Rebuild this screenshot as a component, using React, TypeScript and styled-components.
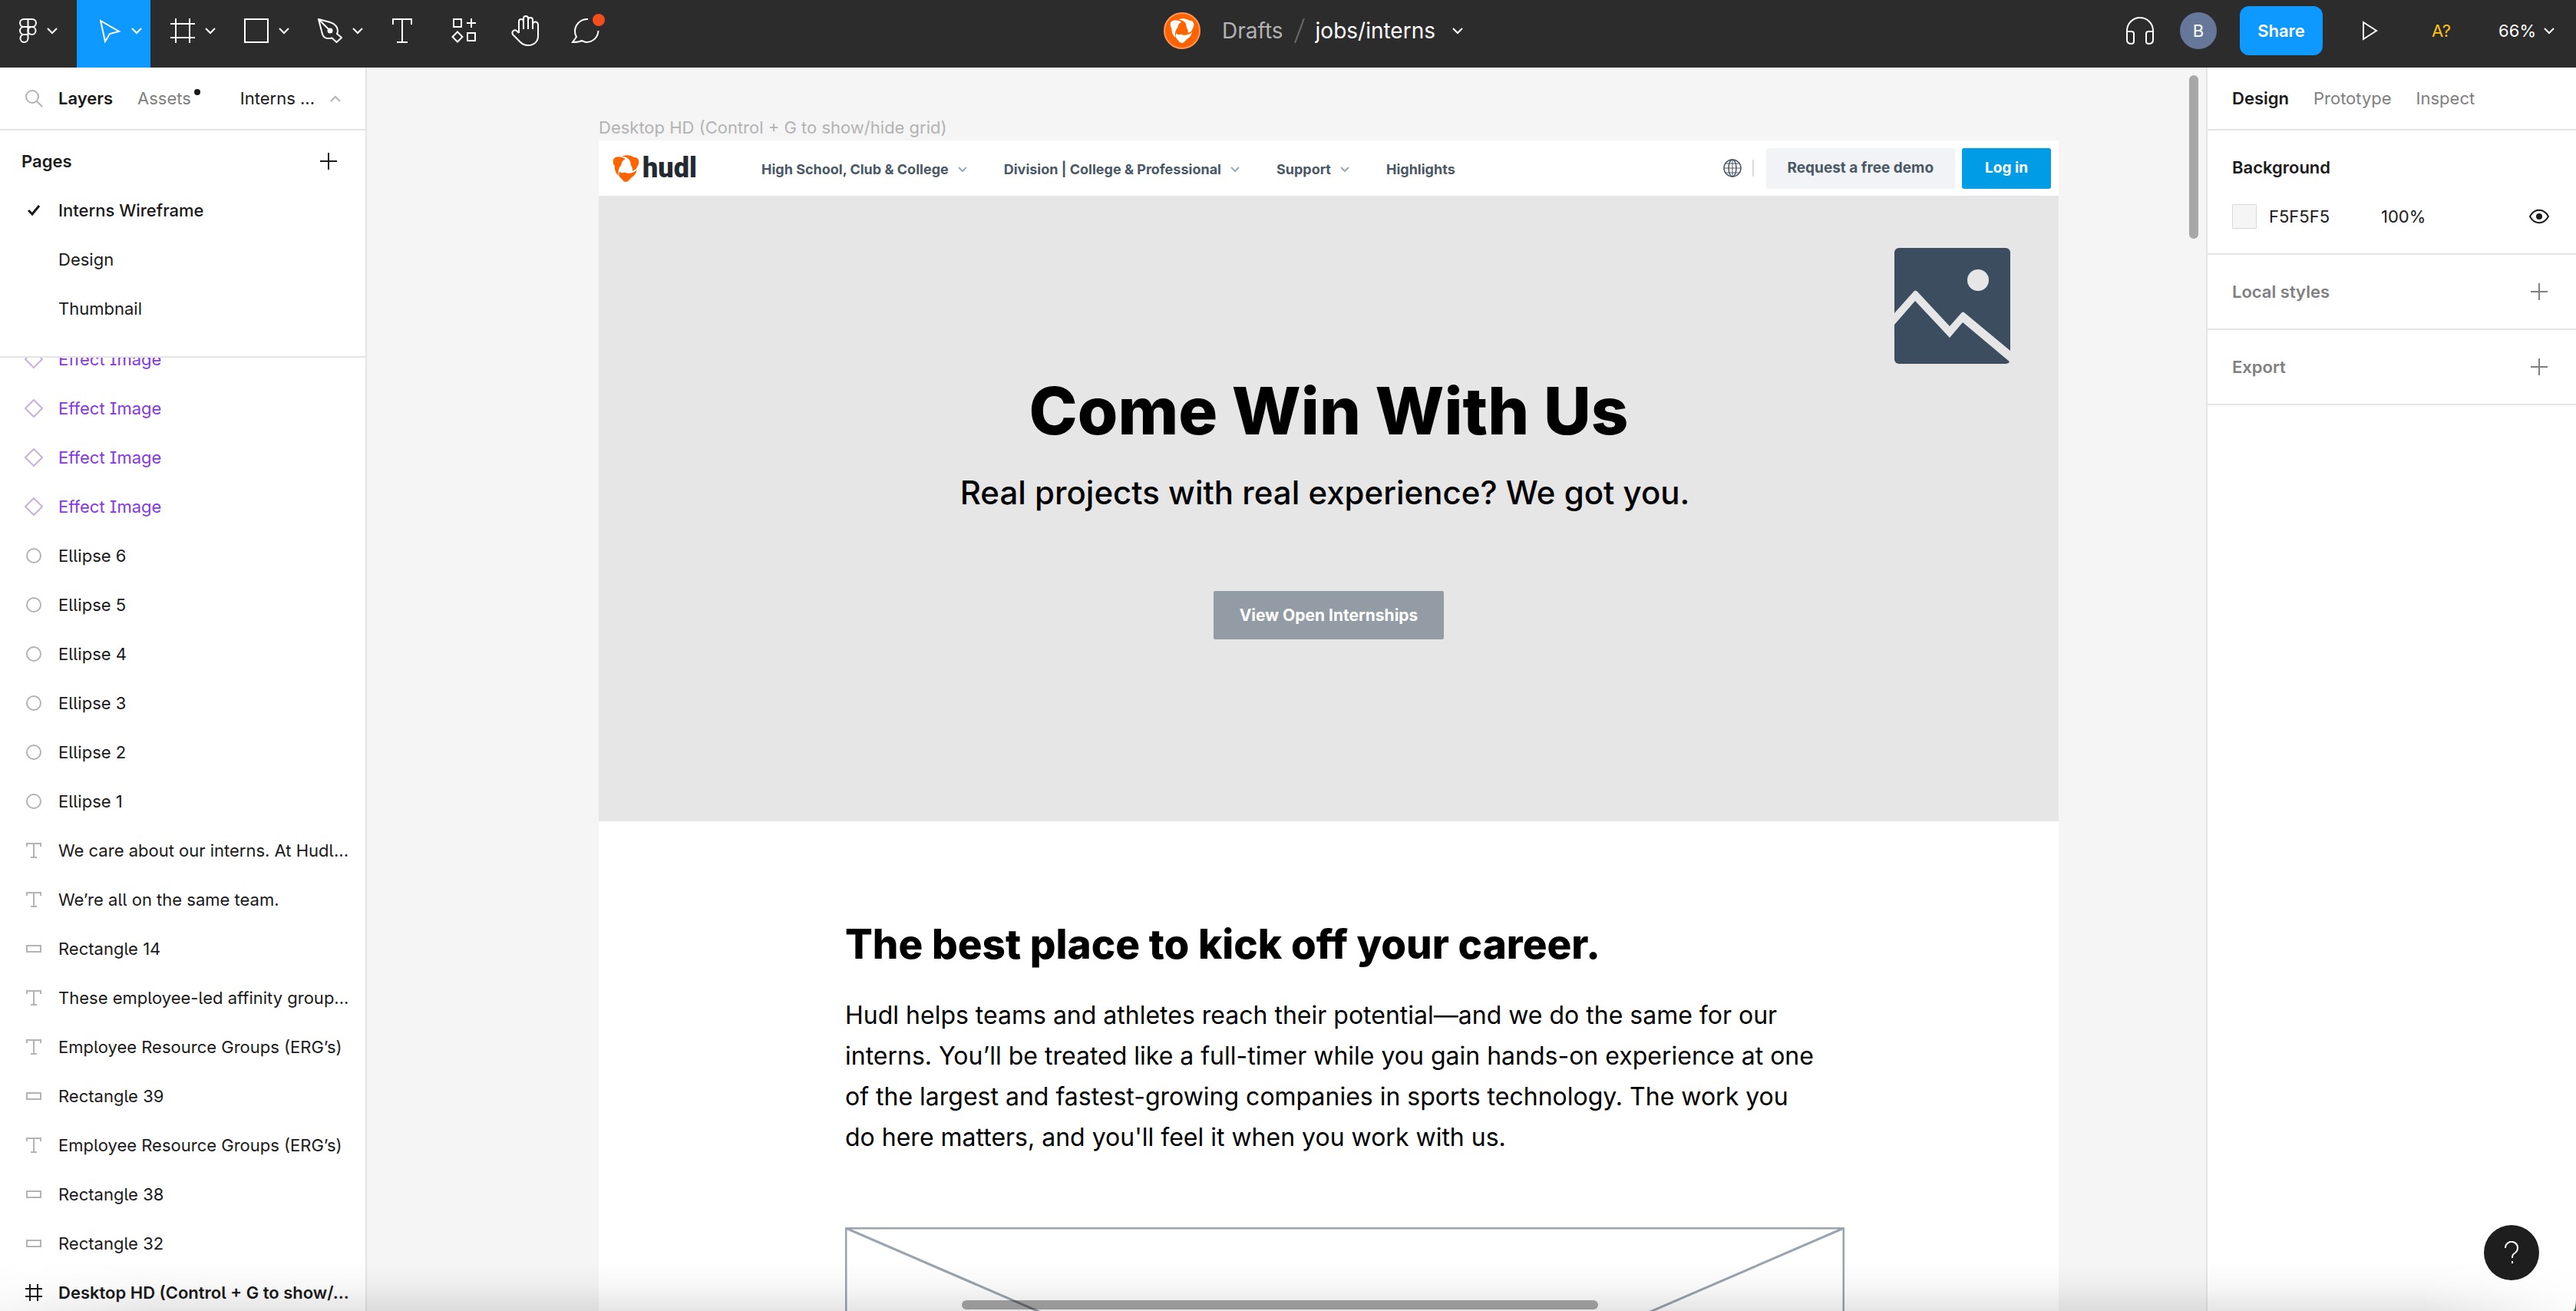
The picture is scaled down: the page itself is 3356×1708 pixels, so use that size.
import React from "react";
import styled, { createGlobalStyle } from "styled-components";

const GlobalStyle = createGlobalStyle`
  *, *::before, *::after { box-sizing: border-box; }
  body {
    margin: 0;
    background: #3f6b4d;
    font-family: Inter, "Noto Sans", sans-serif;
    font-size: 22px;
    line-height: 32px;
    color: #1a1a1a;
  }
  button, input {
    font: inherit;
    letter-spacing: inherit;
    color: inherit;
    background: none;
    border: 0;
    padding: 0;
    margin: 0;
  }
  button { cursor: pointer; }
  a { color: inherit; text-decoration: none; }
  h1, h2, h3, p, ul { margin: 0; padding: 0; }
  ul { list-style: none; }
  svg { display: block; flex: none; }
`;

/* ---------- shell ---------- */

const Shell = styled.div`
  position: relative;
  display: grid;
  grid-template-rows: 88px minmax(0, 1fr);
  height: 100vh;
  overflow: hidden;
  background: #fff;
  border-bottom-right-radius: 4px 16px;
`;

const Workspace = styled.div`
  display: grid;
  grid-template-columns: 478px minmax(0, 1fr) 482px;
  min-height: 0;
`;

const BottomShade = styled.div`
  position: absolute;
  inset: auto 0 0 0;
  height: 64px;
  pointer-events: none;
  background: linear-gradient(to bottom, rgba(0, 0, 0, 0), rgba(0, 0, 0, 0.03) 50%, rgba(0, 0, 0, 0.1));
  mask-image: linear-gradient(to right, rgba(0, 0, 0, 0.3), #000 6%, #000 94%, rgba(0, 0, 0, 0.1));
`;

const HelpButton = styled.button`
  position: absolute;
  right: 48px;
  bottom: 40px;
  width: 72px;
  height: 72px;
  border-radius: 50%;
  background: #1e1e1e;
  color: #fff;
  display: grid;
  place-items: center;
`;

/* ---------- top bar ---------- */

const TopBar = styled.header`
  display: grid;
  grid-template-columns: auto 1fr 738px;
  background: #2c2c2c;
  color: #fff;
`;

const ToolGroup = styled.div`
  display: flex;
  align-items: stretch;
`;

const Tool = styled.button<{ $active?: boolean }>`
  width: 80px;
  display: flex;
  align-items: center;
  justify-content: center;
  padding-bottom: 8px;
`;

const MenuTool = styled(Tool)<{ $end?: number }>`
  width: ${(p) => (p.$end ? 100 : 96)}px;
  justify-content: flex-end;
  gap: 13px;
  padding-right: ${(p) => p.$end ?? 11}px;
  background: ${(p) => (p.$active ? "#0d99ff" : "transparent")};
`;

const FileTitle = styled.div`
  display: flex;
  align-items: center;
  justify-content: center;
  padding-bottom: 8px;
  font-size: 28px;
`;

const TeamAvatar = styled.span`
  width: 48px;
  height: 48px;
  margin-right: 28px;
  border-radius: 50%;
  border: 2px solid #ff9759;
  background: #ff6300;
  display: grid;
  place-items: center;
`;

const FolderLink = styled.a`
  color: #b3b3b3;
`;

const Slash = styled.svg`
  margin: 0 14px;
`;

const FileButton = styled.button`
  display: flex;
  align-items: center;
  gap: 22px;
`;

const RightGroup = styled.div`
  display: flex;
  align-items: center;
  justify-content: flex-end;
  padding: 0 28px 8px 0;
`;

const UserAvatar = styled.span`
  width: 48px;
  height: 48px;
  margin: 0 30px 0 34px;
  border-radius: 50%;
  background: #667799;
  display: grid;
  place-items: center;
`;

const ShareButton = styled.button`
  width: 108px;
  height: 64px;
  border-radius: 12px;
  background: #0d99ff;
  font-weight: 600;
`;

const PlayButton = styled.button`
  margin: 0 70px 0 52px;
`;

const MissingFont = styled.button`
  margin-right: 62px;
  color: #ffc21a;
`;

const ZoomButton = styled.button`
  display: flex;
  align-items: center;
  gap: 10px;
`;

/* ---------- left panel ---------- */

const LeftPanel = styled.aside`
  display: flex;
  flex-direction: column;
  min-height: 0;
  border-right: 2px solid #e5e5e5;
`;

const LeftTabs = styled.div`
  display: flex;
  align-items: center;
  height: 82px;
  padding: 0 32px;
  border-bottom: 2px solid #e5e5e5;
`;

const TabButton = styled.button<{ $on?: boolean }>`
  position: relative;
  font-weight: ${(p) => (p.$on ? 600 : 400)};
  color: ${(p) => (p.$on ? "#1a1a1a" : "#808080")};
`;

const TabsLeftGroup = styled.div`
  display: flex;
  gap: 32px;
  margin-left: 20px;
  flex: 1;
`;

const Dot = styled.span`
  position: absolute;
  top: 4px;
  right: -12px;
  width: 8px;
  height: 8px;
  border-radius: 50%;
  background: #1a1a1a;
`;

const PageSwitch = styled.button`
  display: flex;
  align-items: center;
  gap: 20px;
`;

const PagesSection = styled.section`
  padding: 8px 0 30px;
  border-bottom: 2px solid #e5e5e5;
`;

const PagesHead = styled.div`
  height: 64px;
  display: flex;
  align-items: center;
  justify-content: space-between;
  padding: 0 34px 0 28px;

  h2 {
    font-size: 22px;
    font-weight: 600;
  }
`;

const IconButton = styled.button`
  width: 28px;
  height: 28px;
  display: grid;
  place-items: center;
`;

const Row = styled.button<{ $tone?: "component" | "frame" }>`
  width: 100%;
  height: 64px;
  display: grid;
  grid-template-columns: 24px minmax(0, 1fr);
  column-gap: 20px;
  align-items: center;
  justify-items: start;
  padding: 0 18px 0 32px;
  text-align: left;
  color: ${(p) => (p.$tone === "component" ? "#8638e5" : "#1a1a1a")};
  font-weight: ${(p) => (p.$tone === "frame" ? 600 : 400)};

  svg { justify-self: center; }
`;

const RowLabel = styled.span`
  grid-column: 2;
  max-width: 100%;
  overflow: hidden;
  text-overflow: ellipsis;
  white-space: nowrap;
`;

const PageName = styled(RowLabel)<{ $current?: boolean }>`
  font-weight: ${(p) => (p.$current ? 500 : 400)};
`;

const LayersViewport = styled.div`
  flex: 1;
  min-height: 0;
  overflow: hidden;
`;

/* The list is scrolled so that its first row is partly hidden. */
const LayerList = styled.ul`
  margin-top: -30px;
  font-feature-settings: "cv05", "cv08";
`;

/* ---------- canvas ---------- */

const Canvas = styled.main`
  position: relative;
  min-width: 0;
  min-height: 0;
  overflow: hidden;
  padding: 62px 192px 0 302px;
  background: #f5f5f5;
`;

const FrameLabel = styled.div`
  height: 33px;
  color: #b3b3b3;
`;

const Frame = styled.article`
  background: #fff;
  color: #000;
`;

const SiteHeader = styled.header`
  display: flex;
  align-items: center;
  height: 72px;
  padding: 0 10px 0 18px;
`;

const Brand = styled.a`
  display: flex;
  align-items: center;
  gap: 4px;
  width: 194px;
  font-family: Roboto, sans-serif;
  font-size: 36px;
  font-weight: 900;
  color: #232a31;
`;

const SiteNav = styled.nav`
  display: flex;
  flex: 1;
  gap: 48px;
  padding-top: 3px;
  font-size: 18px;
  font-weight: 700;
  color: #4a5866;
`;

const NavItem = styled.a`
  display: flex;
  align-items: center;
  gap: 12px;
  white-space: nowrap;
`;

const NavDivider = styled.span`
  width: 2px;
  height: 22px;
  margin: 0 16px 0 14px;
  background: #d5dae0;
`;

const SiteButton = styled.button<{ $primary?: boolean }>`
  height: 53px;
  padding: 0 ${(p) => (p.$primary ? 30 : 28)}px;
  margin-right: ${(p) => (p.$primary ? 0 : 9)}px;
  border-radius: 3px;
  font-size: 19px;
  font-weight: 700;
  color: ${(p) => (p.$primary ? "#fff" : "#4a5866")};
  background: ${(p) => (p.$primary ? "#009ce6" : "#f1f3f6")};
`;

const Hero = styled.section`
  position: relative;
  display: flex;
  flex-direction: column;
  align-items: center;
  height: 815px;
  padding-top: 229px;
  background: #e6e6e6;
`;

const HeroPicture = styled.svg`
  position: absolute;
  top: 68px;
  right: 63px;
`;

const HeroTitle = styled.h1`
  font-size: 85px;
  line-height: 104px;
  font-weight: 800;
`;

const HeroText = styled.p`
  margin-top: 28px;
  padding-right: 10px;
  font-size: 42px;
  line-height: 52px;
  font-weight: 500;
`;

const HeroButton = styled.button`
  margin-top: 102px;
  height: 63px;
  min-width: 300px;
  border-radius: 2px;
  background: #939ba4;
  color: #fff;
  font-size: 21px;
  font-weight: 700;
`;

const Story = styled.section`
  padding: 128px 279px 0 321px;
`;

const StoryTitle = styled.h2`
  font-size: 53px;
  line-height: 64px;
  font-weight: 800;
`;

const StoryText = styled.p`
  max-width: 1268px;
  margin: 34px 0 91px;
  font-size: 32px;
  line-height: 53px;
`;

const Placeholder = styled.svg`
  width: 100%;
  height: auto;
`;

const VScroll = styled.div`
  position: absolute;
  top: 10px;
  right: 10px;
  width: 12px;
  height: 213px;
  border-radius: 6px;
  background: #a8a8a8;
`;

const HScroll = styled.div`
  position: absolute;
  bottom: 2px;
  left: 775px;
  right: 792px;
  height: 12px;
  border-radius: 6px;
  background: rgba(0, 0, 0, 0.34);
`;

/* ---------- right panel ---------- */

const RightPanel = styled.aside`
  border-left: 2px solid #e5e5e5;
`;

const PanelTabs = styled.div`
  display: flex;
  align-items: center;
  gap: 32px;
  height: 82px;
  padding: 0 32px;
  border-bottom: 2px solid #e5e5e5;
`;

const PanelSection = styled.section`
  padding: 16px 34px 16px 32px;
  border-bottom: 2px solid #e5e5e5;
`;

const PanelRow = styled.div<{ $muted?: boolean }>`
  display: flex;
  align-items: center;
  height: 64px;
  color: ${(p) => (p.$muted ? "#808080" : "#1a1a1a")};

  h3 {
    flex: 1;
    font-size: 22px;
    font-weight: 600;
  }
`;

const Swatch = styled.button`
  width: 32px;
  height: 32px;
  margin-right: 16px;
  border: 1px solid #d9d9d9;
  border-radius: 1px;
  background: #f5f5f5;
`;

const Field = styled.input<{ $w: number }>`
  width: ${(p) => p.$w}px;
  height: 32px;
`;

const EyeButton = styled(IconButton)`
  margin-left: auto;
`;

/* ---------- icons ---------- */

type StrokeIconProps = { w: number; h: number; sw?: number; color?: string; children: React.ReactNode };

const StrokeIcon = ({ w, h, sw = 2, color = "currentColor", children }: StrokeIconProps) => (
  <svg width={w} height={h} viewBox={`0 0 ${w} ${h}`} fill="none" stroke={color} strokeWidth={sw} aria-hidden="true">
    {children}
  </svg>
);

const Chevron = ({ up = false, color }: { up?: boolean; color?: string }) => (
  <StrokeIcon w={14} h={9} color={color}>
    <path d={up ? "M1 8 7 2l6 6" : "M1 1l6 6 6-6"} />
  </StrokeIcon>
);

const NavChevron = () => (
  <StrokeIcon w={12} h={8} color="#9aa8b8">
    <path d="M1 1l5 5 5-5" />
  </StrokeIcon>
);

const Plus = () => (
  <StrokeIcon w={22} h={22}>
    <path d="M11 0v22M0 11h22" />
  </StrokeIcon>
);

const HudlMark = ({ size, color }: { size: number; color: string }) => (
  <svg width={size} height={size} viewBox="0 0 102 106" fill={color} aria-hidden="true">
    <path d="M48 16C34 4 12 5 4 14-2 22 0 36 6 42c0 16 4 30 16 40-2-14-2-30 10-42 2-12 6-20 16-24z" />
    <path d="M36 5C50-2 70-1 82 9c16-1 22 10 19 24-1 7-5 10-6 14-2 8-8 14-20 15 4-8 0-16-5-22C71 22 62 8 36 5z" />
    <path d="M26 64c4 7 14 8 20 4 12 7 30 6 48-8-3 14-10 22-20 28-8 6-12 17-24 18-10-1-13-10-20-16-8-7-8-16-4-26z" />
  </svg>
);

const FigmaIcon = () => (
  <StrokeIcon w={23} h={32}>
    <path d="M11.500 1H6a5 5 0 0 0 0 10h5.500zM11.500 1H17a5 5 0 0 1 0 10h-5.500zM11.500 11H6a5 5 0 0 0 0 10h5.500zM11.500 21H6a5 5 0 1 0 5.500 5z" />
    <circle cx="16.500" cy="16" r="5" />
  </StrokeIcon>
);

const MoveIcon = () => (
  <StrokeIcon w={28} h={32}>
    <path d="M1 3l24 14-12 3-6 10z" />
  </StrokeIcon>
);

const FrameIcon = () => (
  <StrokeIcon w={32} h={32}>
    <path d="M7 0v32M25 0v32M0 7h32M0 25h32" />
  </StrokeIcon>
);

const RectIcon = () => (
  <StrokeIcon w={32} h={32}>
    <path d="M1 1h30v30H1z" />
  </StrokeIcon>
);

const PenIcon = () => (
  <StrokeIcon w={32} h={32}>
    <path d="M1 1l15 4c7 2 10 7 10 11 0 2-.5 3-1 4l6 5-6.500 6-6-5.500c-8 2-12-1-13-7L1 1l14 14" />
    <circle cx="16" cy="16" r="2.500" fill="currentColor" />
  </StrokeIcon>
);

const TextIcon = () => (
  <StrokeIcon w={26} h={32}>
    <path d="M1 8V1h24v7M13 1v30M6 31h14" />
  </StrokeIcon>
);

const ResourcesIcon = () => (
  <StrokeIcon w={32} h={32}>
    <path d="M3 1h10v10H3zM21 19h10v10H21zM26 0v12M20 6h12M8 17.500l6.500 6.500L8 30.500 1.500 24z" />
  </StrokeIcon>
);

const HandIcon = () => (
  <StrokeIcon w={36} h={40}>
    <path d="M10 23V8a3 3 0 0 1 6 0v10M16 8V4a3 3 0 0 1 6 0v14M22 6a3 3 0 0 1 6 0v12M28 12a3 3 0 0 1 7 0v15c0 7-5 12-13 12-4 0-7-1-10-4L2 25c-2-4 2-7 5-5l3 3" />
  </StrokeIcon>
);

const CommentIcon = () => (
  <StrokeIcon w={48} h={48}>
    <g transform="translate(4 0)">
      <path d="M22 9h-2A16 16 0 0 0 5 25c0 3 .7 5 2 7L2 39c5 0 9-.5 12-2 2 1 4 2 6 2a15.500 15.500 0 0 0 15.500-15" />
      <circle cx="36" cy="10" r="8" fill="#f24e1e" stroke="none" />
    </g>
  </StrokeIcon>
);

const HeadphonesIcon = () => (
  <StrokeIcon w={36} h={36}>
    <path d="M1 30V18a17 17 0 0 1 34 0v12M1 19h6q3 0 3 3v10q0 3-3 3-6 0-6-5zM35 19h-6q-3 0-3 3v10q0 3 3 3 6 0 6-5z" />
  </StrokeIcon>
);

const LayerGlyph = ({ kind }: { kind: string }) => {
  switch (kind) {
    case "component":
      return (
        <StrokeIcon w={24} h={24} color="#c7b1e0">
          <path d="M12 1l11 11-11 11L1 12z" />
        </StrokeIcon>
      );
    case "ellipse":
      return (
        <StrokeIcon w={20} h={20} color="#b3b3b3">
          <circle cx="10" cy="10" r="9" />
        </StrokeIcon>
      );
    case "text":
      return (
        <StrokeIcon w={20} h={20} color="#b3b3b3">
          <path d="M1 5V1h18v4M10 1v18M6 19h8" />
        </StrokeIcon>
      );
    case "rect":
      return (
        <StrokeIcon w={20} h={10} color="#b3b3b3">
          <path d="M1 1h18v8H1z" />
        </StrokeIcon>
      );
    default:
      return (
        <StrokeIcon w={22} h={22}>
          <path d="M6 0v22M16 0v22M0 6h22M0 16h22" />
        </StrokeIcon>
      );
  }
};

/* ---------- data ---------- */

const pages = ["Interns Wireframe", "Design", "Thumbnail"];

const layers: [string, string][] = [
  ["component", "Effect Image"],
  ["component", "Effect Image"],
  ["component", "Effect Image"],
  ["component", "Effect Image"],
  ["ellipse", "Ellipse 6"],
  ["ellipse", "Ellipse 5"],
  ["ellipse", "Ellipse 4"],
  ["ellipse", "Ellipse 3"],
  ["ellipse", "Ellipse 2"],
  ["ellipse", "Ellipse 1"],
  ["text", "We care about our interns. At Hudl..."],
  ["text", "We’re all on the same team."],
  ["rect", "Rectangle 14"],
  ["text", "These employee-led affinity group..."],
  ["text", "Employee Resource Groups (ERG’s)"],
  ["rect", "Rectangle 39"],
  ["text", "Employee Resource Groups (ERG’s)"],
  ["rect", "Rectangle 38"],
  ["rect", "Rectangle 32"],
  ["frame", "Desktop HD (Control + G to show/..."],
];

/* ---------- parts ---------- */

const Toolbar = () => (
  <TopBar>
    <ToolGroup>
      <MenuTool $end={25} aria-label="Main menu"><FigmaIcon /><Chevron /></MenuTool>
      <MenuTool $active aria-label="Move"><MoveIcon /><Chevron /></MenuTool>
      <MenuTool aria-label="Frame"><FrameIcon /><Chevron /></MenuTool>
      <MenuTool aria-label="Rectangle"><RectIcon /><Chevron /></MenuTool>
      <MenuTool aria-label="Pen"><PenIcon /><Chevron /></MenuTool>
      <Tool aria-label="Text"><TextIcon /></Tool>
      <Tool aria-label="Resources"><ResourcesIcon /></Tool>
      <Tool aria-label="Hand"><HandIcon /></Tool>
      <Tool aria-label="Comment"><CommentIcon /></Tool>
    </ToolGroup>
    <FileTitle>
      <TeamAvatar><HudlMark size={32} color="#fff" /></TeamAvatar>
      <FolderLink href="#drafts">Drafts</FolderLink>
      <Slash width="14" height="32" viewBox="0 0 14 32" stroke="#6b6b6b" strokeWidth="2" aria-hidden="true">
        <path d="M13 0 1 32" />
      </Slash>
      <FileButton>jobs/interns<Chevron /></FileButton>
    </FileTitle>
    <RightGroup>
      <button aria-label="Start conversation"><HeadphonesIcon /></button>
      <UserAvatar>B</UserAvatar>
      <ShareButton>Share</ShareButton>
      <PlayButton aria-label="Present">
        <StrokeIcon w={20} h={26}><path d="M1 2v22l17-11z" /></StrokeIcon>
      </PlayButton>
      <MissingFont aria-label="Missing fonts">A?</MissingFont>
      <ZoomButton>66%<Chevron /></ZoomButton>
    </RightGroup>
  </TopBar>
);

const LayersPanel = () => (
  <LeftPanel>
    <LeftTabs>
      <StrokeIcon w={24} h={24} color="#b3b3b3">
        <circle cx="10" cy="10" r="8" />
        <path d="M16 16l7 7" />
      </StrokeIcon>
      <TabsLeftGroup>
        <TabButton $on>Layers</TabButton>
        <TabButton>Assets<Dot /></TabButton>
      </TabsLeftGroup>
      <PageSwitch>Interns ...<Chevron up color="#b3b3b3" /></PageSwitch>
    </LeftTabs>
    <PagesSection>
      <PagesHead>
        <h2>Pages</h2>
        <IconButton aria-label="Add page"><Plus /></IconButton>
      </PagesHead>
      {pages.map((name, i) => (
        <Row key={name}>
          {i === 0 && (
            <StrokeIcon w={16} h={14} sw={3}><path d="M1 7l5 5 9-11" /></StrokeIcon>
          )}
          <PageName $current={i === 0}>{name}</PageName>
        </Row>
      ))}
    </PagesSection>
    <LayersViewport>
      <LayerList>
        {layers.map(([kind, name], i) => (
          <li key={i}>
            <Row $tone={kind === "component" || kind === "frame" ? kind : undefined}>
              <LayerGlyph kind={kind} />
              <RowLabel>{name}</RowLabel>
            </Row>
          </li>
        ))}
      </LayerList>
    </LayersViewport>
  </LeftPanel>
);

const CanvasArea = () => (
  <Canvas>
    <FrameLabel>Desktop HD (Control + G to show/hide grid)</FrameLabel>
    <Frame>
      <SiteHeader>
        <Brand href="#home"><HudlMark size={35} color="#ff6300" />hudl</Brand>
        <SiteNav>
          <NavItem href="#club">High School, Club &amp; College<NavChevron /></NavItem>
          <NavItem href="#pro">Division | College &amp; Professional<NavChevron /></NavItem>
          <NavItem href="#support">Support<NavChevron /></NavItem>
          <NavItem href="#highlights">Highlights</NavItem>
        </SiteNav>
        <StrokeIcon w={24} h={24} color="#4a5866">
          <circle cx="12" cy="12" r="11" strokeWidth="1.500" />
          <ellipse cx="12" cy="12" rx="5" ry="11" strokeWidth="1.500" />
          <path d="M1 12h22M3 6h18M3 18h18M12 1v22" strokeWidth="1" />
        </StrokeIcon>
        <NavDivider />
        <SiteButton>Request a free demo</SiteButton>
        <SiteButton $primary>Log in</SiteButton>
      </SiteHeader>
      <Hero>
        <HeroPicture width="151" height="151" viewBox="0 0 151 151" aria-hidden="true">
          <rect width="151" height="151" rx="6" fill="#3b4d5e" />
          <circle cx="109" cy="42" r="14" fill="#e6e6e6" />
          <path d="M0 85 25 57q2-3 5 0l42 45 15-17q2-3 5 0l59 49v15L89 97l-17 20-45-48L0 100z" fill="#e6e6e6" />
        </HeroPicture>
        <HeroTitle>Come Win With Us</HeroTitle>
        <HeroText>Real projects with real experience? We got you.</HeroText>
        <HeroButton>View Open Internships</HeroButton>
      </Hero>
      <Story>
        <StoryTitle>The best place to kick off your career.</StoryTitle>
        <StoryText>
          Hudl helps teams and athletes reach their potential—and we do the same for our interns. You’ll be
          treated like a full-timer while you gain hands-on experience at one of the largest and fastest-growing
          companies in sports technology. The work you do here matters, and you'll feel it when you work with us.
        </StoryText>
        <Placeholder viewBox="0 0 1302 564" fill="none" stroke="#9aa4ae" strokeWidth="3" aria-hidden="true">
          <path d="M1 1h1300v562H1zM1 1l1300 562M1301 1 1 563" />
        </Placeholder>
      </Story>
    </Frame>
    <VScroll />
    <HScroll />
  </Canvas>
);

const DesignPanel = () => (
  <RightPanel>
    <PanelTabs>
      <TabButton $on>Design</TabButton>
      <TabButton>Prototype</TabButton>
      <TabButton>Inspect</TabButton>
    </PanelTabs>
    <PanelSection>
      <PanelRow><h3>Background</h3></PanelRow>
      <PanelRow>
        <Swatch aria-label="Background colour" />
        <Field $w={146} defaultValue="F5F5F5" aria-label="Hex value" />
        <Field $w={96} defaultValue="100%" aria-label="Opacity" />
        <EyeButton aria-label="Toggle visibility">
          <StrokeIcon w={28} h={20}>
            <path d="M2 10c6-11 18-11 24 0-6 11-18 11-24 0z" />
            <circle cx="14" cy="10" r="4" fill="currentColor" stroke="none" />
          </StrokeIcon>
        </EyeButton>
      </PanelRow>
    </PanelSection>
    <PanelSection>
      <PanelRow $muted><h3>Local styles</h3><IconButton aria-label="Add style"><Plus /></IconButton></PanelRow>
    </PanelSection>
    <PanelSection>
      <PanelRow $muted><h3>Export</h3><IconButton aria-label="Add export"><Plus /></IconButton></PanelRow>
    </PanelSection>
  </RightPanel>
);

export default function App() {
  return (
    <>
      <GlobalStyle />
      <Shell>
        <Toolbar />
        <Workspace>
          <LayersPanel />
          <CanvasArea />
          <DesignPanel />
        </Workspace>
        <BottomShade />
        <HelpButton aria-label="Help">
          <StrokeIcon w={18} h={30}>
            <path d="M1 9a8 8 0 1 1 13 6c-3 2-4 3-4 7M10 26v3" />
          </StrokeIcon>
        </HelpButton>
      </Shell>
    </>
  );
}
